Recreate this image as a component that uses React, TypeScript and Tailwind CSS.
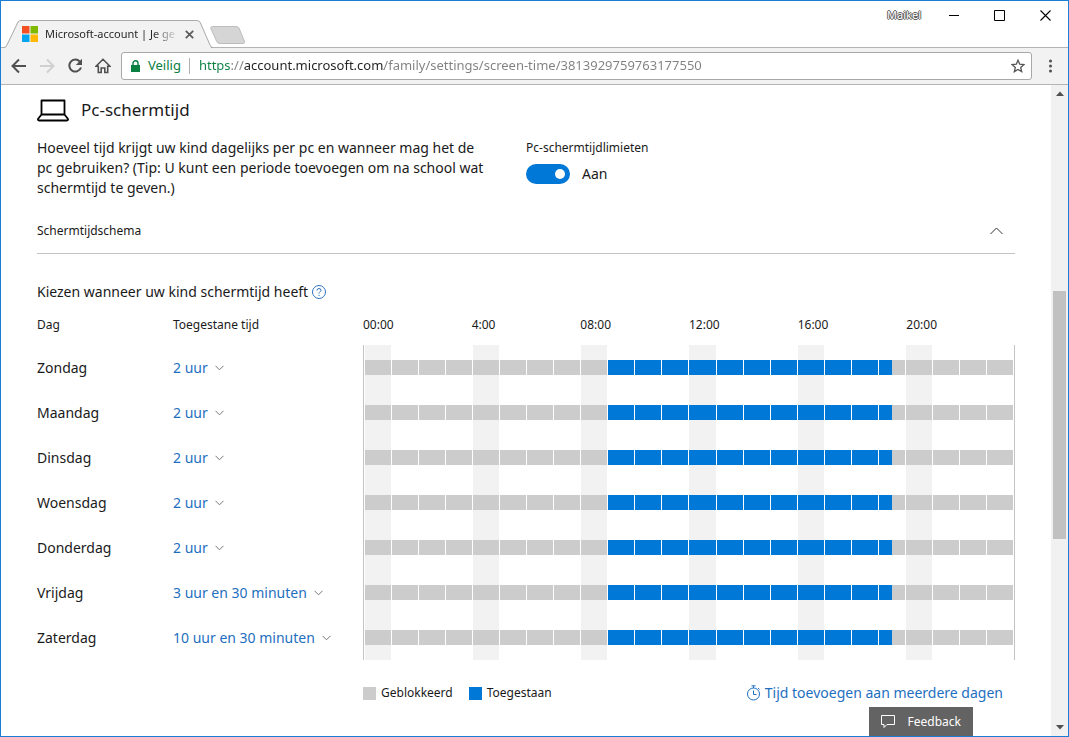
import { useState } from "react";

const HOURS = Array.from({ length: 24 }, (_, i) => i);
const HOUR_LABELS = ["00:00", "4:00", "08:00", "12:00", "16:00", "20:00"];
const TIME_OPTIONS = ["2 uur", "3 uur en 30 minuten", "10 uur en 30 minuten"];

const DAYS = [
  { name: "Zondag", time: "2 uur" },
  { name: "Maandag", time: "2 uur" },
  { name: "Dinsdag", time: "2 uur" },
  { name: "Woensdag", time: "2 uur" },
  { name: "Donderdag", time: "2 uur" },
  { name: "Vrijdag", time: "3 uur en 30 minuten" },
  { name: "Zaterdag", time: "10 uur en 30 minuten" },
];

// allowed between 09:00 and 19:30
const isAllowed = (time: number) => time >= 9 && time < 19.5;

const TitleBar = () => (
  <header className="relative flex h-[47px] shrink-0 items-end justify-between border-b border-[#b4b4b4] bg-white">
    <div className="flex items-end">
      <div className="relative -mb-px ml-[3px] flex h-7 w-[210px] items-center pl-[18px]">
        <svg
          className="absolute inset-0"
          width="210"
          height="28"
          viewBox="0 0 210 28"
        >
          <path d="M1 28 L14 1.5 Q15 .5 16 .5 H193 Q195 .5 196 2 L207 28 Z" fill="#f2f2f2" />
          <path
            d="M0 27.5 Q2 27.5 3 25 L14 2 Q15 .5 17 .5 H192 Q195 .5 196 2 L206 25 Q207 27.5 209 27.5"
            fill="none"
            stroke="#a9a9a9"
          />
        </svg>
        <svg className="relative" width="16" height="16" viewBox="0 0 16 16">
          <path d="M0 0h7.5v7.5H0z" fill="#f25022" />
          <path d="M8.5 0H16v7.5H8.5z" fill="#7fba00" />
          <path d="M0 8.5h7.5V16H0z" fill="#00a4ef" />
          <path d="M8.5 8.5H16V16H8.5z" fill="#ffb900" />
        </svg>
        <span className="relative ml-[7px] w-[134px] bg-linear-to-r from-[#222] from-80% to-transparent bg-clip-text text-[11px] whitespace-nowrap text-transparent">
          Microsoft-account | Je ge
        </span>
        <button className="relative ml-1.5" aria-label="Tabblad sluiten">
          <svg width="9" height="9" viewBox="0 0 9 9">
            <path d="M.8 .8l7.400 7.400M8.200 .8l-7.400 7.400" stroke="#5a5a5a" strokeWidth="1.700" />
          </svg>
        </button>
      </div>
      <button className="-ml-1 mb-[3px]" aria-label="Nieuw tabblad">
        <svg width="36" height="18" viewBox="0 0 36 18">
          <path
            d="M3 .5H26Q28 .5 29 2L34.500 15.500Q35 17.500 33 17.500H10Q8 17.500 7 16L.8 2.500Q.3 .5 3 .5Z"
            fill="#d5d5d5"
            stroke="#bdbdbd"
          />
        </svg>
      </button>
    </div>
    <div className="flex items-center self-start pt-[7px]">
      <span className="mr-7 text-[11px] leading-[14px] text-white [text-shadow:1px_0_0_#555,-1px_0_0_#555,0_1px_0_#555,0_-1px_0_#555]">
        Maikel
      </span>
      <button className="mr-[34px]" aria-label="Minimaliseren">
        <svg width="11" height="12" viewBox="0 0 11 12">
          <path d="M0 6.500h10" stroke="#000" />
        </svg>
      </button>
      <button className="mr-[35px]" aria-label="Maximaliseren">
        <svg width="11" height="12" viewBox="0 0 11 12">
          <path d="M.5 1.500h10v10H.5z" fill="none" stroke="#000" />
        </svg>
      </button>
      <button className="mr-[17px]" aria-label="Sluiten">
        <svg width="11" height="12" viewBox="0 0 11 12">
          <path d="M.5 1.500l10 10M10.500 1.500l-10 10" stroke="#000" strokeWidth="1.100" />
        </svg>
      </button>
    </div>
  </header>
);

const Toolbar = () => {
  const [url, setUrl] = useState(
    "https://account.microsoft.com/family/settings/screen-time/3813929759763177550",
  );

  return (
    <nav className="flex h-[37px] shrink-0 items-center border-b border-[#b4b4b4] bg-[#f2f2f2] pl-2.5">
      <button className="mr-3.5" aria-label="Vorige">
        <svg width="15" height="16" viewBox="0 0 15 16">
          <path d="M15 8H1.500M8 1.500L1.500 8L8 14.500" fill="none" stroke="#505050" strokeWidth="2" />
        </svg>
      </button>
      <button className="mr-3" aria-label="Volgende">
        <svg width="15" height="16" viewBox="0 0 15 16">
          <path d="M0 8h13.500M7 1.500L13.500 8L7 14.500" fill="none" stroke="#d0d0d0" strokeWidth="2" />
        </svg>
      </button>
      <button className="mr-3" aria-label="Opnieuw laden">
        <svg width="16" height="16" viewBox="0 0 16 16">
          <path d="M12.800 3.600A6 6 0 1 0 14 9.500" fill="none" stroke="#505050" strokeWidth="2" />
          <path d="M15 .8V7H8.800z" fill="#505050" />
        </svg>
      </button>
      <button className="mr-2.5" aria-label="Startpagina">
        <svg width="16" height="16" viewBox="0 0 16 16">
          <path
            d="M1 8.300L8 1.300l7 7h-2.300v6.200H9.800V10H6.200v4.500H3.300V8.300z"
            fill="none"
            stroke="#505050"
            strokeWidth="1.600"
          />
        </svg>
      </button>
      <div className="flex h-7 flex-1 items-center rounded-[3px] border border-[#a8a8a8] bg-white pr-1.5 pl-[9px]">
        <svg width="9" height="12" viewBox="0 0 9 12">
          <path d="M0 5h9v7H0z" fill="#0b8043" />
          <path d="M2 5.500V3.300a2.500 2.500 0 0 1 5 0v2.200" fill="none" stroke="#0b8043" strokeWidth="1.400" />
        </svg>
        <span className="ml-2 text-[13px] text-[#0b8043]">Veilig</span>
        <span className="mx-2 h-4 w-px bg-[#b0b0b0]" />
        <input
          className="ml-px min-w-0 flex-1 bg-[linear-gradient(to_right,#0b8043_32px,#808080_32px,#808080_45px,#222_45px,#222_185px,#808080_185px)] bg-clip-text text-[13px] text-transparent outline-none"
          aria-label="Adres"
          value={url}
          onChange={(e) => setUrl(e.target.value)}
        />
        <button aria-label="Bladwijzer toevoegen">
          <svg width="14" height="14" viewBox="0 0 14 14">
            <path
              d="M7 1.200l1.700 4 4.300.4-3.300 2.800 1 4.200L7 10.400l-3.700 2.200 1-4.200L1 5.600l4.300-.4z"
              fill="none"
              stroke="#555"
              strokeWidth="1.300"
            />
          </svg>
        </button>
      </div>
      <button className="mr-4 ml-[17px]" aria-label="Menu">
        <svg width="3" height="14" viewBox="0 0 3 14" fill="#505050">
          <circle cx="1.500" cy="2" r="1.500" />
          <circle cx="1.500" cy="7" r="1.500" />
          <circle cx="1.500" cy="12" r="1.500" />
        </svg>
      </button>
    </nav>
  );
};

const HourCell = ({ hour }: { hour: number }) => (
  <div className={`mr-px flex items-center ${hour % 4 === 0 ? "bg-[#f2f2f2]" : ""}`}>
    {[hour, hour + 0.5].map((half) => (
      <div
        key={half}
        className={`h-[15px] flex-1 ${isAllowed(half) ? "bg-[#0078d7]" : "bg-[#cccccc]"}`}
      />
    ))}
  </div>
);

const DayRow = ({ name, time }: { name: string; time: string }) => {
  const [value, setValue] = useState(time);

  return (
    <tr className="h-[45px]">
      <th scope="row" className="pt-px text-left text-sm font-normal">
        {name}
      </th>
      <td className="pt-px">
        <div className="flex items-center">
          <select
            className="field-sizing-content appearance-none text-sm text-[#1e6fc0] outline-none"
            aria-label={`Toegestane tijd ${name}`}
            value={value}
            onChange={(e) => setValue(e.target.value)}
          >
            {TIME_OPTIONS.map((option) => (
              <option key={option}>{option}</option>
            ))}
          </select>
          <svg className="ml-[7px]" width="9" height="6" viewBox="0 0 9 6">
            <path d="M.5 .8l4 4 4-4" fill="none" stroke="#777" />
          </svg>
        </div>
      </td>
      <td className="h-[45px] p-0">
        <div className="grid h-[45px] grid-cols-24 border-x border-[#c4c4c4] pl-px">
          {HOURS.map((hour) => (
            <HourCell key={hour} hour={hour} />
          ))}
        </div>
      </td>
    </tr>
  );
};

const ScreenTime = () => {
  const [enabled, setEnabled] = useState(true);

  return (
    <main className="min-w-0 flex-1 overflow-hidden px-9 pt-[13px]">
      <h1 className="flex h-6 items-center gap-3 text-[17px]">
        <svg width="32" height="24" viewBox="0 0 32 24">
          <path
            d="M4.500 2.500h23v14h-23zM4.500 16.500L1 21q-.3 1.500 1 1.500h28q1.300 0 1-1.500l-3.500-4.500"
            fill="none"
            stroke="#000"
            strokeWidth="1.800"
            strokeLinejoin="round"
          />
        </svg>
        Pc-schermtijd
      </h1>

      <div className="mt-4 flex">
        <p className="w-1/2 pr-9 text-sm leading-5">
          Hoeveel tijd krijgt uw kind dagelijks per pc en wanneer mag het de pc
          gebruiken? (Tip: U kunt een periode toevoegen om na school wat
          schermtijd te geven.)
        </p>
        <div>
          <label htmlFor="limits" className="block text-xs leading-5">
            Pc-schermtijdlimieten
          </label>
          <div className="mt-1.5 flex items-center gap-3">
            <input
              id="limits"
              type="checkbox"
              role="switch"
              checked={enabled}
              onChange={(e) => setEnabled(e.target.checked)}
              className="flex h-5 w-11 appearance-none items-center rounded-full bg-gray-400 px-[5px] before:size-2.5 before:rounded-full before:bg-white checked:justify-end checked:bg-[#0078d7]"
            />
            <span className="text-sm">{enabled ? "Aan" : "Uit"}</span>
          </div>
        </div>
      </div>

      <button className="mt-[19px] flex h-[37px] w-full items-center justify-between border-b border-[#c4c4c4] pr-3 pb-2 text-xs">
        Schermtijdschema
        <svg width="13" height="8" viewBox="0 0 13 8">
          <path d="M.5 7l6-6 6 6" fill="none" stroke="#333" />
        </svg>
      </button>

      <h2 className="mt-7 flex h-5 items-center gap-1 text-sm">
        Kiezen wanneer uw kind schermtijd heeft
        <button aria-label="Help">
          <svg width="14" height="14" viewBox="0 0 14 14" fill="none" stroke="#2f72bd">
            <circle cx="7" cy="7" r="6.500" />
            <path d="M5 5.500q0-2 2-2t2 1.700q0 .9-1 1.600T7 8.500M7 9.800v1.200" />
          </svg>
        </button>
      </h2>

      <table className="mt-2 w-full table-fixed border-collapse">
        <thead>
          <tr className="h-[30px] text-left align-top text-xs leading-[30px]">
            <th className="w-[136px] p-0 font-normal">Dag</th>
            <th className="w-[190px] p-0 font-normal">Toegestane tijd</th>
            <th className="p-0 pb-[5px] font-normal">
              <div className="grid grid-cols-6">
                {HOUR_LABELS.map((label) => (
                  <span key={label}>{label}</span>
                ))}
              </div>
            </th>
          </tr>
        </thead>
        <tbody>
          {DAYS.map((day) => (
            <DayRow key={day.name} name={day.name} time={day.time} />
          ))}
        </tbody>
      </table>

      <div className="mt-6 flex items-center justify-between pr-3 pl-[326px]">
        <div className="flex items-center gap-4 text-xs">
          <span className="flex items-center gap-[5px]">
            <span className="size-[13px] bg-[#cccccc]" />
            Geblokkeerd
          </span>
          <span className="flex items-center gap-[5px]">
            <span className="size-[13px] bg-[#0078d7]" />
            Toegestaan
          </span>
        </div>
        <a href="#" className="flex items-center gap-1 text-sm leading-[18px] text-[#1e6fc0]">
          <svg width="15" height="16" viewBox="0 0 15 16" fill="none" stroke="currentColor">
            <circle cx="7.500" cy="9" r="6" />
            <path d="M5.500 .8h4M7.500 1v2M12 3l1.500 1.500M7.500 5.500V9.500h3" />
          </svg>
          Tijd toevoegen aan meerdere dagen
        </a>
      </div>
    </main>
  );
};

const ScrollBar = () => (
  <div className="flex w-[17px] shrink-0 flex-col items-center bg-[#f1f1f1] py-1.5" aria-hidden="true">
    <svg width="8" height="5" viewBox="0 0 8 5">
      <path d="M0 5l4-4.500L8 5z" fill="#505050" />
    </svg>
    <div className="flex w-full flex-1 flex-col px-0.5">
      <div className="flex-[195]" />
      <div className="flex-[247] bg-[#c1c1c1]" />
      <div className="flex-[186]" />
    </div>
    <svg width="8" height="5" viewBox="0 0 8 5">
      <path d="M0 0l4 4.500L8 0z" fill="#505050" />
    </svg>
  </div>
);

const App = () => {
  return (
    <div className="relative flex h-screen flex-col border border-[#1a7fd4] bg-white font-['Noto_Sans','Open_Sans',sans-serif] text-[#1a1a1a]">
      <TitleBar />
      <Toolbar />
      <div className="flex min-h-0 flex-1">
        <ScreenTime />
        <ScrollBar />
      </div>
      <button className="absolute right-[95px] bottom-0 flex h-[29px] items-center gap-[13px] bg-[#636363] pr-3 pl-3 text-xs text-white">
        <svg width="14" height="13" viewBox="0 0 14 13">
          <path d="M.5 .5h13v9H6l-3 3v-3H.5z" fill="none" stroke="#fff" />
        </svg>
        Feedback
      </button>
    </div>
  );
};

export default App;
